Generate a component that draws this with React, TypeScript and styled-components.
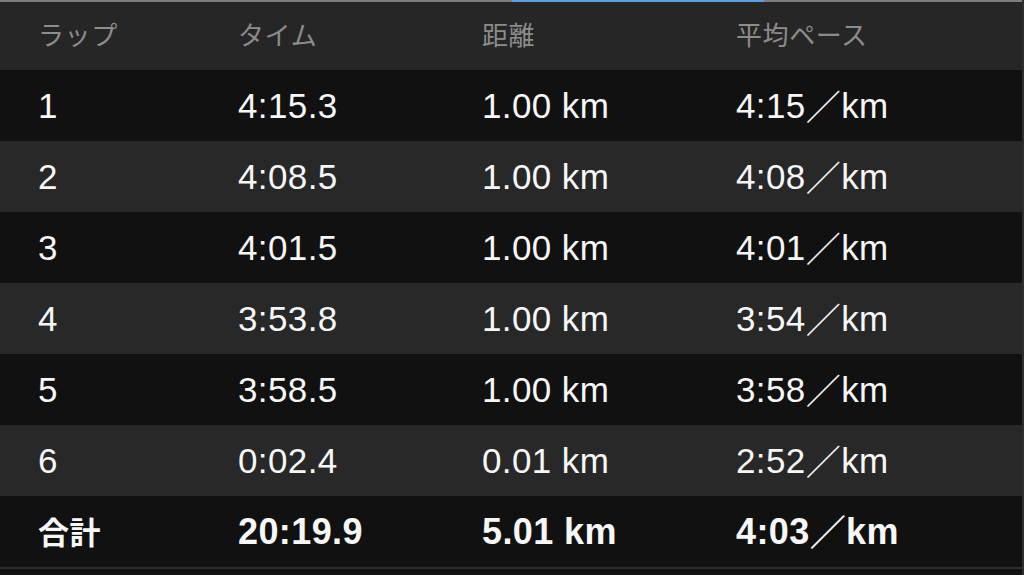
import React from 'react';
import styled, { createGlobalStyle } from 'styled-components';

const GlobalStyle = createGlobalStyle`
  html, body {
    margin: 0;
    padding: 0;
    background: #111111;
  }
  body {
    font-family: 'Liberation Sans', 'Noto Sans CJK JP', sans-serif;
  }
`;

const Screen = styled.div`
  width: 1024px;
  height: 575px;
  overflow: hidden;
  background: #111111;
  border-right: 2px solid #2e2e2e;
  box-sizing: border-box;
`;

// thin top line with the blue tab indicator
const TopLine = styled.div`
  height: 2px;
  background: linear-gradient(
    to right,
    #7d7d7d 0,
    #7d7d7d 512px,
    #5aa0dc 512px,
    #5aa0dc 764px,
    #7d7d7d 764px
  );
`;

const Row = styled.div<{ $variant: 'head' | 'dark' | 'light' }>`
  display: grid;
  grid-template-columns: 200px 244px 254px 1fr;
  align-items: center;
  padding-left: 38px;
  height: ${(p) => (p.$variant === 'head' ? '68px' : '71px')};
  background: ${(p) =>
    p.$variant === 'head' ? '#262626' : p.$variant === 'light' ? '#282828' : '#111111'};
`;

const HeadCell = styled.div`
  font-family: 'Noto Sans CJK JP', sans-serif;
  font-size: 26px;
  line-height: 30px;
  color: #8c8c8c;
  letter-spacing: 0.6px;
  padding-bottom: 4px;
`;

const Cell = styled.div<{ $bold?: boolean }>`
  font-size: ${(p) => (p.$bold ? '36px' : '35px')};
  line-height: 40px;
  letter-spacing: 0.4px;
  color: #f7f7f7;
  font-weight: ${(p) => (p.$bold ? 700 : 400)};
  white-space: nowrap;
`;

const Jp = styled.span`
  font-family: 'Noto Sans CJK JP', sans-serif;
  font-size: 31px;
  line-height: 0;
`;

const Slash = styled.span`
  font-family: 'Noto Sans CJK JP', sans-serif;
  line-height: 0;
  position: relative;
  top: 2px;
`;

const BottomLine = styled.div`
  height: 2px;
  background: #2c2c2c;
`;

const laps = [
  { lap: '1', time: '4:15.3', dist: '1.00 km', pace: '4:15' },
  { lap: '2', time: '4:08.5', dist: '1.00 km', pace: '4:08' },
  { lap: '3', time: '4:01.5', dist: '1.00 km', pace: '4:01' },
  { lap: '4', time: '3:53.8', dist: '1.00 km', pace: '3:54' },
  { lap: '5', time: '3:58.5', dist: '1.00 km', pace: '3:58' },
  { lap: '6', time: '0:02.4', dist: '0.01 km', pace: '2:52' },
];

const Pace = ({ value }: { value: string }) => (
  <>
    {value}
    <Slash>／</Slash>km
  </>
);

export default function App() {
  return (
    <Screen>
      <GlobalStyle />
      <TopLine />
      <Row $variant="head">
        <HeadCell>ラップ</HeadCell>
        <HeadCell>タイム</HeadCell>
        <HeadCell>距離</HeadCell>
        <HeadCell>平均ペース</HeadCell>
      </Row>
      {laps.map((l, i) => (
        <Row key={l.lap} $variant={i % 2 === 0 ? 'dark' : 'light'}>
          <Cell>{l.lap}</Cell>
          <Cell>{l.time}</Cell>
          <Cell>{l.dist}</Cell>
          <Cell>
            <Pace value={l.pace} />
          </Cell>
        </Row>
      ))}
      <Row $variant="dark">
        <Cell $bold>
          <Jp>合計</Jp>
        </Cell>
        <Cell $bold>20:19.9</Cell>
        <Cell $bold>5.01 km</Cell>
        <Cell $bold>
          <Pace value="4:03" />
        </Cell>
      </Row>
      <BottomLine />
    </Screen>
  );
}
